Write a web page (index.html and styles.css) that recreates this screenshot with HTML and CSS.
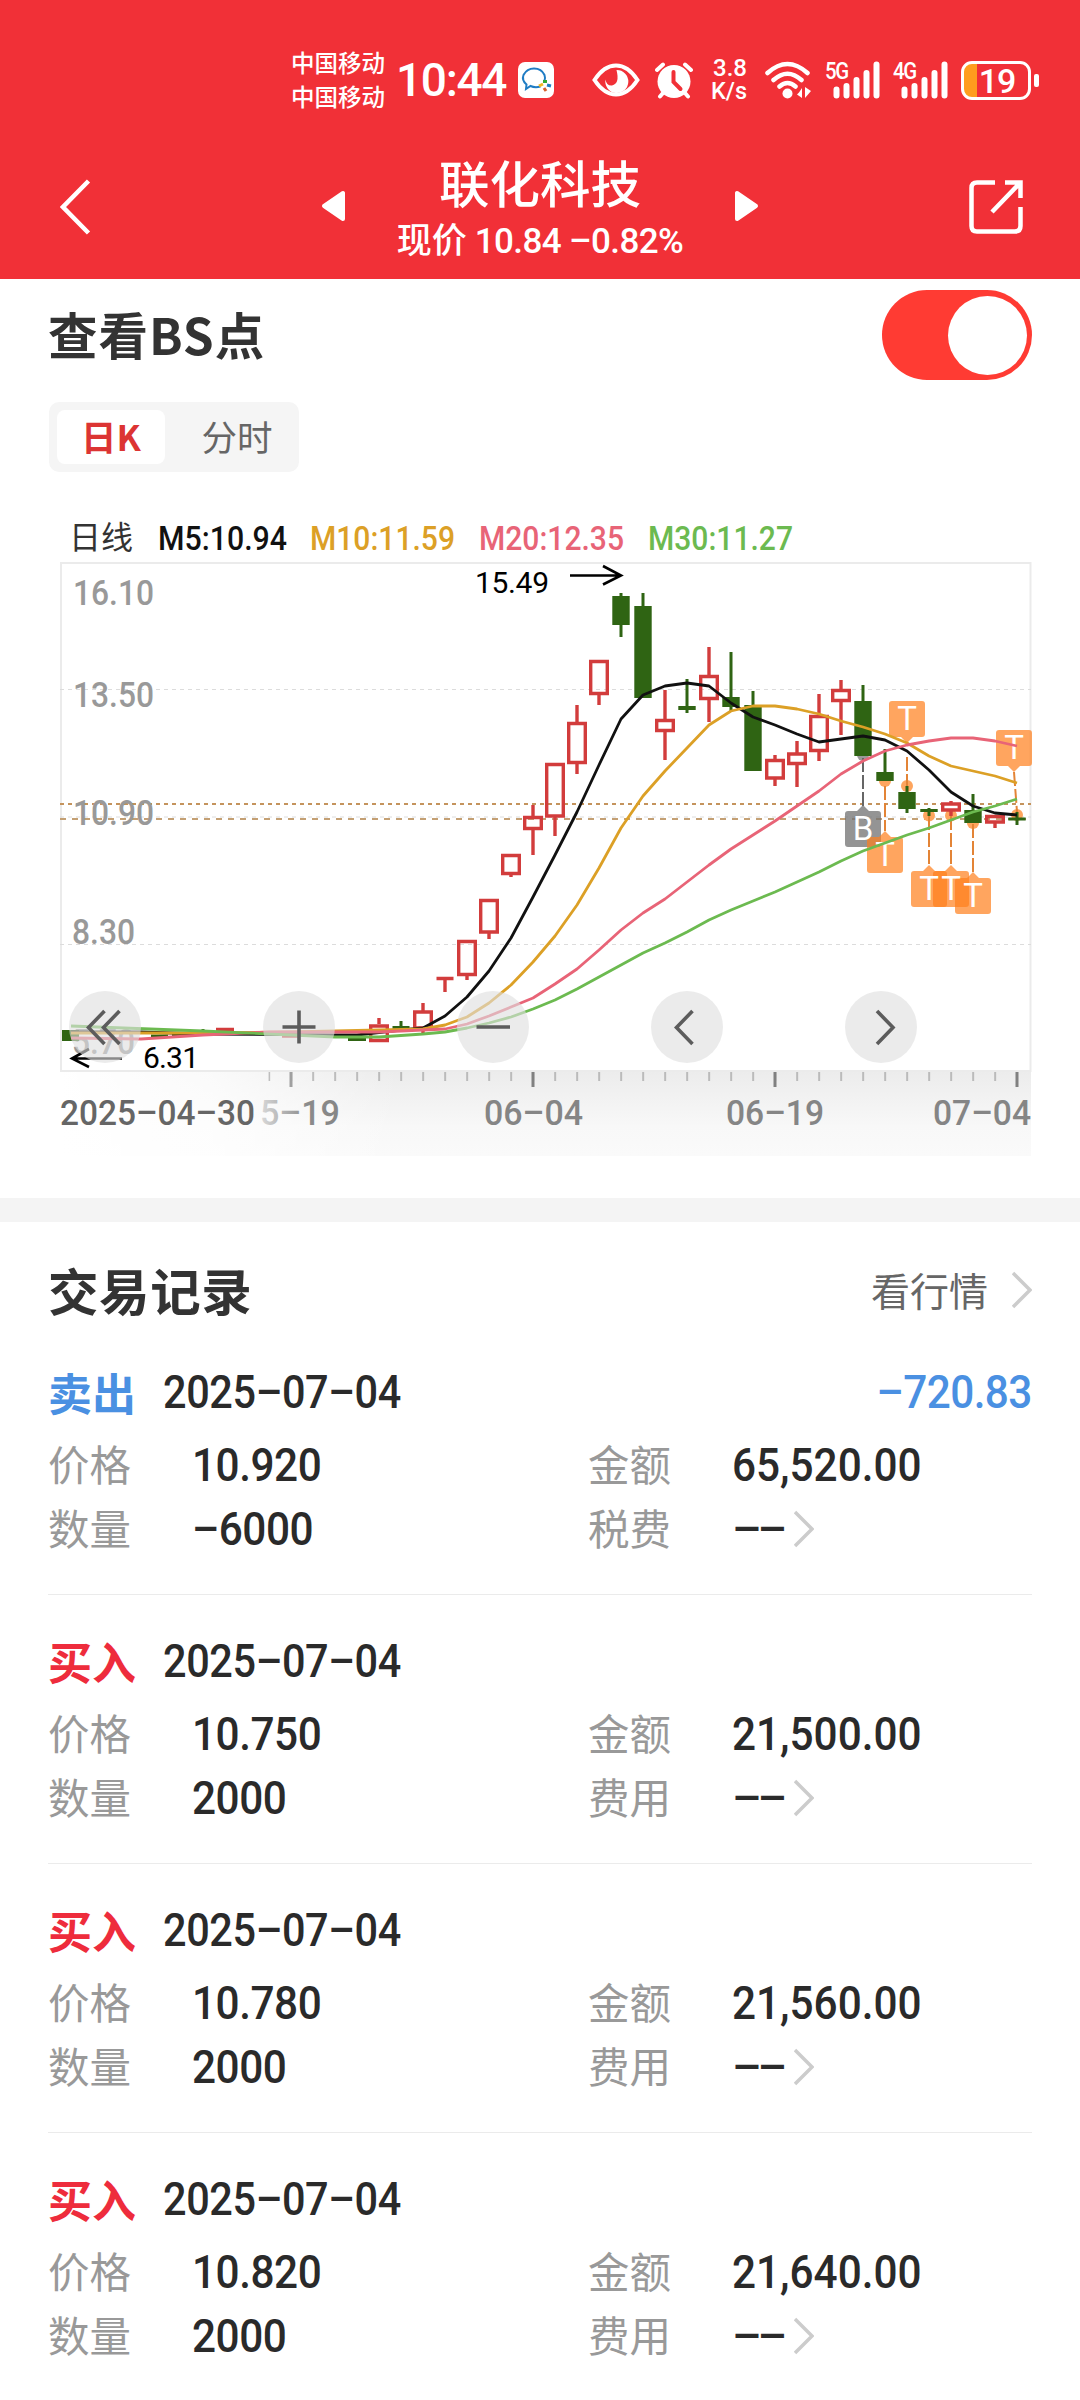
FILE: index.html
```html
<!DOCTYPE html>
<html lang="zh-CN">
<head>
<meta charset="utf-8">
<title>联化科技</title>
<link rel="stylesheet" href="styles.css">
</head>
<body>
<header class="header">
  <div class="status">
    <div class="carrier"><span>中国移动</span><span>中国移动</span></div>
    <div class="clock">10:44</div>
    <svg class="chat" width="36" height="36" viewBox="0 0 36 36"><rect width="36" height="36" rx="7" fill="#fff"/><path d="M22.500 24.500Q17 26 12.500 24L8 27L8.500 22.500Q3.500 18 5.500 13Q9 6.500 16 6.500Q23.500 6.500 26.500 13Q27.500 16 26.500 18.500" fill="none" stroke="#1f7cc4" stroke-width="2"/><path d="M27 18v3" stroke="#3a3" stroke-width="4"/><path d="M29 23l4 1" stroke="#1f7cc4" stroke-width="3"/><path d="M26 26l2 3" stroke="#d6602c" stroke-width="3"/><path d="M21 24l4-2" stroke="#f2b822" stroke-width="3"/></svg>
    <svg class="eye" width="48" height="34" viewBox="0 0 48 34"><path d="M2.500 17Q12 2.500 24 2.500T45.500 17Q36 31.500 24 31.500T2.500 17Z" fill="none" stroke="#fff" stroke-width="4"/><path d="M24.500 7a11.500 11.500 0 1 1-11 9.500q1 6.500 6.500 6q8-2 4.500-15.500Z" fill="#fff"/></svg>
    <svg class="alarm" width="38" height="38" viewBox="0 0 38 38"><circle cx="19" cy="20.500" r="16.500" fill="#fff"/><path d="M2 9l6-5.500M36 9l-6-5.500M8 32l-3 3.500M30 32l3 3.500" stroke="#fff" stroke-width="4" stroke-linecap="round"/><path d="M18.500 11v10l7 7" fill="none" stroke="#f13037" stroke-width="4" stroke-linecap="round"/></svg>
    <div class="speed"><span>3.8</span><span>K/s</span></div>
    <svg class="wifi" width="48" height="38" viewBox="0 0 48 38"><g fill="none" stroke="#fff" stroke-width="4.500" stroke-linecap="round"><path d="M3.500 12Q23.500-6 43.500 12M9.500 19Q23.500 6.500 37.500 19M15.500 25.500Q23.500 18.500 31.500 25.500"/></g><circle cx="23.500" cy="32.500" r="5" fill="#fff"/><path d="M38 27v10l-5-3.500 2-2zM41 26v11l6-7z" fill="#fff"/></svg>
    <div class="signal"><span>5G</span><svg width="47" height="38" viewBox="0 0 47 38"><path d="M3.500 28.500v6M13.500 25v9.500M23.500 19v15.500M33.500 12v22.500M43.500 3.500v31" stroke="#fff" stroke-width="6" stroke-linecap="round"/></svg></div>
    <div class="signal"><span>4G</span><svg width="47" height="38" viewBox="0 0 47 38"><path d="M3.500 28.500v6M13.500 25v9.500M23.500 19v15.500M33.500 12v22.500M43.500 3.500v31" stroke="#fff" stroke-width="6" stroke-linecap="round"/></svg></div>
    <div class="battery"><span>19</span></div><i class="nub"></i>
  </div>
  <nav class="nav">
    <svg class="back" width="34" height="56" viewBox="0 0 34 56"><path d="M28.500 2L3 28l25.500 26" fill="none" stroke="#fff" stroke-width="4.500"/></svg>
    <svg width="24" height="32" viewBox="0 0 24 32"><path d="M22 3v26L3 16z" fill="#fff" stroke="#fff" stroke-width="4" stroke-linejoin="round"/></svg>
    <div class="stock"><div class="name">联化科技</div><div class="quote">现价 <b>10.84 –0.82%</b></div></div>
    <svg width="24" height="32" viewBox="0 0 24 32"><path d="M2 3v26l19-13z" fill="#fff" stroke="#fff" stroke-width="4" stroke-linejoin="round"/></svg>
    <svg class="share" width="56" height="56" viewBox="0 0 56 56"><path d="M27 3.500H9Q3.500 3.500 3.500 9v38q0 5.500 5.500 5.500h38q5.500 0 5.500-5.500V28M37 3.500h15.500V19M52 4L24 33" fill="none" stroke="#fff" stroke-width="4.500"/></svg>
  </nav>
</header>

<section class="view">
  <div class="view-head"><h2>查看BS点</h2><div class="toggle"><i></i></div></div>
  <div class="tabs"><span class="tab active">日K</span><span class="tab">分时</span></div>
</section>

<svg class="chart" width="1080" height="700" viewBox="0 498 1080 700">
  <defs>
    <linearGradient id="axisFill" x1="0" y1="0" x2="0" y2="1"><stop offset="0" stop-color="#ececec"/><stop offset=".65" stop-color="#f8f8f8"/><stop offset="1" stop-color="#fafafa"/></linearGradient>
    <linearGradient id="axisFade" x1="0" y1="0" x2="1" y2="0"><stop offset="0" stop-color="#fff"/><stop offset=".45" stop-color="#fff" stop-opacity=".75"/><stop offset="1" stop-color="#fff" stop-opacity="0"/></linearGradient>
    <linearGradient id="labelFade" gradientUnits="userSpaceOnUse" x1="250" y1="0" x2="345" y2="0"><stop offset="0" stop-color="#8a8a8a" stop-opacity=".15"/><stop offset=".6" stop-color="#858585" stop-opacity=".95"/><stop offset="1" stop-color="#858585"/></linearGradient>
    <pattern id="ticks" patternUnits="userSpaceOnUse" x="268.500" y="1072" width="22" height="10"><rect width="1.200" height="9" fill="#999"/></pattern>
  </defs>
  <text class="cn" x="69" y="549" textLength="64">日线</text>
  <g class="legend">
    <text x="158" y="550" textLength="129" lengthAdjust="spacingAndGlyphs" fill="#111">M5:10.94</text>
    <text x="310" y="550" textLength="145" lengthAdjust="spacingAndGlyphs" fill="#dca026">M10:11.59</text>
    <text x="479" y="550" textLength="145" lengthAdjust="spacingAndGlyphs" fill="#e86477">M20:12.35</text>
    <text x="648" y="550" textLength="145" lengthAdjust="spacingAndGlyphs" fill="#6cba50">M30:11.27</text>
  </g>
  <rect x="61" y="563" width="969.500" height="508" fill="none" stroke="#ebebeb" stroke-width="2"/>
  <path d="M60 689.500h971M60 817h971M60 944.500h971" stroke="#dcdcdc" stroke-dasharray="4 4"/>
  <path d="M60 804h971" stroke="#c4935c" stroke-width="2" stroke-dasharray="4 4"/>
  <path d="M60 819h971" stroke="#c4a074" stroke-width="2" stroke-dasharray="6 6"/>
  <g class="scale">
    <text x="73" y="605" textLength="81" lengthAdjust="spacingAndGlyphs">16.10</text>
    <text x="73" y="707" textLength="81" lengthAdjust="spacingAndGlyphs">13.50</text>
    <text x="73" y="825" textLength="81" lengthAdjust="spacingAndGlyphs">10.90</text>
    <text x="72" y="944" textLength="63" lengthAdjust="spacingAndGlyphs">8.30</text>
    <text x="72" y="1054" textLength="63" lengthAdjust="spacingAndGlyphs">5.70</text>
  </g>
  <g class="peak"><text x="475" y="593" textLength="74">15.49</text><text x="143" y="1068" textLength="56">6.31</text></g>
  <path d="M570 575.500h50M603 566l18 9.500-18 9M122 1058.500H72M89 1049l-17 9.500 17 8.500" fill="none" stroke="#000" stroke-width="2.600"/>

  <g fill="#fea55e">
    <circle cx="863" cy="755" r="6" fill="#999"/>
    <circle cx="885" cy="781" r="6"/><circle cx="907" cy="786" r="6"/><circle cx="929" cy="815.500" r="6"/><circle cx="951" cy="815.500" r="6"/><circle cx="973" cy="823" r="6"/><circle cx="1017" cy="815" r="6"/>
  </g>
  <g stroke="#e38436" stroke-width="2" stroke-dasharray="14 3">
    <path d="M885 786v45M907 757v29M929 816v50M951 816v50M973 824v48M1014 772l3 40"/><path d="M863 758v48" stroke="#666"/>
  </g>
  <g class="up-wick">
    <path d="M379 1018v6M423 1003v8M423 1029v6M445 980v12M467 976v4M489 933v6M511 874v3M533 805v12M533 829v26M555 816v20M577 705v18M577 764v10M599 694v11M665 690v30M665 731v29M709 647v29M709 699v23M775 755v5M775 779v7M797 741v12M797 763v24M819 694v22M819 751v10M841 680v10M841 701v34M951 801v3M951 810v6M995 823v5"/>
  </g>
  <g class="up">
    <path d="M370.700 1026h16.600v14.500h-16.600zM414.700 1012h16.600v16h-16.600zM458.700 941.500h16.600v33h-16.600zM480.700 900.500h16.600v31.500h-16.600zM502.700 855.500h16.600v18h-16.600zM524.700 817.500h16.600v11h-16.600zM546.700 764.500h16.600v51.500h-16.600zM568.700 723.500h16.600v39h-16.600zM590.700 661.500h16.600v32h-16.600zM656.700 720.500h16.600v10h-16.600zM700.700 676.500h16.600v22h-16.600zM766.700 760.500h16.600v17.500h-16.600zM788.700 754h16.600v9.500h-16.600zM810.700 716.500h16.600v34h-16.600zM832.700 690.500h16.600v10h-16.600zM942.700 804h16.600v6h-16.600zM986.700 816.500h16.600v5.500h-16.600z"/>
    <path d="M436.500 978.500h17M216 1029.500h18M282 1036h17"/>
  </g>
  <g class="down-wick"><path d="M401 1021v6M203 1029v5M621 593v44M643 593v20M687 679v34M731 652v59M753 691v20M863 685v20M885 749v30M907 786v27M929 808v8M973 794v20M1017 812v13"/></g>
  <path class="down" d="M62 1030h17v11h-17zM151 1034.500h17v3h-17zM172 1034h17v3h-17zM348 1038h18v3h-18zM392.500 1026h17v4h-17zM612.300 596h17.400v29h-17.400zM634.300 606h17.400v92h-17.400zM678.300 706h17.400v4h-17.400zM722.300 697h17.400v10h-17.400zM744.300 705h17.400v66h-17.400zM854.300 701h17.400v55h-17.400zM876.300 772h17.400v9h-17.400zM898.300 792h17.400v17h-17.400zM920.300 809h17.400v3h-17.400zM964.300 810h17.400v13h-17.400zM1008.300 817.500h17.400v3h-17.400z"/>

  <g class="pins">
    <path d="M892 701h30q3 0 3 3v30q0 3-3 3h-9l-6 6-6-6h-9q-3 0-3-3v-30q0-3 3-3z"/>
    <path d="M999 730h30q3 0 3 3v30q0 3-3 3h-9l-6 6-6-6h-9q-3 0-3-3v-30q0-3 3-3z"/>
    <path class="buy" d="M848 811h9l6-6 6 6h9q3 0 3 3v30q0 3-3 3h-30q-3 0-3-3v-30q0-3 3-3z"/>
    <path d="M870 837h9l6-6 6 6h9q3 0 3 3v30q0 3-3 3h-30q-3 0-3-3v-30q0-3 3-3z"/>
    <path d="M914 871h9l6-6 6 6h9q3 0 3 3v30q0 3-3 3h-30q-3 0-3-3v-30q0-3 3-3z"/>
    <path d="M936 871h9l6-6 6 6h9q3 0 3 3v30q0 3-3 3h-30q-3 0-3-3v-30q0-3 3-3z"/>
    <path d="M958 878h9l6-6 6 6h9q3 0 3 3v30q0 3-3 3h-30q-3 0-3-3v-30q0-3 3-3z"/>
  </g>
  <g class="pin-text">
    <text x="907" y="730">T</text><text x="1014" y="759">T</text><text x="863" y="840">B</text><text x="885" y="866">T</text><text x="929" y="900">T</text><text x="951" y="900">T</text><text x="973" y="907">T</text>
  </g>
  <g class="ma">
    <path stroke="#111" d="M71 1032L141 1032 203 1034 335 1035 357 1035 401 1030 423 1028 445 1016 467 997 489 971 511 938 533 897 555 855 577 812 599 765 621 719 643 695 665 686 687 683 709 686 731 703 753 717 775 725 797 734 819 742 841 739 863 736 885 740 907 751 929 770 951 792 973 806 995 813 1017 815"/>
    <path stroke="#dca026" d="M71 1033L181 1033 291 1032 423 1029 445 1025 467 1017 489 1003 511 985 533 962 555 936 577 905 599 868 621 828 643 796 665 771 687 748 709 725 731 711 753 706 775 706 797 709 819 714 841 721 863 727 885 734 907 743 929 756 951 766 973 771 995 776 1017 783"/>
    <path stroke="#e86477" d="M71 1038L141 1039 203 1035 269 1032 379 1032 423 1030 445 1029 467 1024 489 1016 511 1007 533 998 555 984 577 969 599 950 621 930 643 913 665 899 687 882 709 865 731 849 753 835 775 821 797 806 819 791 841 774 863 761 885 751 907 745 929 741 951 738 973 738 995 741 1017 746"/>
    <path stroke="#6cba50" d="M71 1026L203 1031 335 1037 379 1037 423 1034 445 1032 467 1028 489 1023 511 1017 533 1009 555 1000 577 989 599 977 621 965 643 953 665 943 687 932 709 920 731 910 753 901 775 892 797 882 819 872 841 861 863 851 885 843 907 835 929 828 951 820 973 812 995 806 1017 799"/>
  </g>

  <rect x="60" y="1072" width="971" height="84" fill="url(#axisFill)"/>
  <rect x="60" y="1072" width="340" height="84" fill="url(#axisFade)"/>
  <rect x="268.500" y="1072" width="748" height="10" fill="url(#ticks)"/>
  <path d="M533 1072v15M775 1072v15M1017 1072v15" stroke="#808080" stroke-width="3"/><path d="M291 1072v15" stroke="#a0a0a0" stroke-width="3"/>
  <g class="dates">
    <text x="260" y="1125" textLength="80" lengthAdjust="spacingAndGlyphs" fill="url(#labelFade)">5–19</text>
    <text x="60" y="1125" textLength="195" lengthAdjust="spacingAndGlyphs" fill="#666">2025–04–30</text>
    <text x="484" y="1125" textLength="99" lengthAdjust="spacingAndGlyphs">06–04</text><text x="726" y="1125" textLength="98" lengthAdjust="spacingAndGlyphs">06–19</text><text x="933" y="1125" textLength="98" lengthAdjust="spacingAndGlyphs">07–04</text>
  </g>
  <g fill="#dfdfdf" fill-opacity=".62"><circle cx="105" cy="1027" r="36"/><circle cx="299" cy="1027" r="36"/><circle cx="493" cy="1027" r="36"/><circle cx="687" cy="1027" r="36"/><circle cx="881" cy="1027" r="36"/></g>
  <path d="M104.500 1011L88.500 1027.500l16 16.500M119.500 1011L103.500 1027.500l16 16.500M282.500 1027h33M299 1010.500v33M476.500 1027h33.500M692.500 1011L676.500 1027.500l16 16.500M877 1011l16 16.500-16 16.500" fill="none" stroke="#5c5c5c" stroke-width="3.600"/>
</svg>

<section class="records">
  <div class="records-head"><h2>交易记录</h2><a><span>看行情</span><svg class="chev" width="20" height="38" viewBox="0 0 20 38"><path d="M1 2l17 17L1 36" fill="none" stroke="#ccc" stroke-width="3.500"/></svg></a></div>
  <article class="record">
    <div class="top"><strong class="sell">卖出</strong><time>2025–07–04</time><em>–720.83</em></div>
    <dl><dt>价格</dt><dd>10.920</dd><dt>金额</dt><dd class="amount">65,520.00</dd><dt>数量</dt><dd>–6000</dd><dt>税费</dt><dd class="fee">––<svg width="20" height="38" viewBox="0 0 20 38"><path d="M1 2l17 17L1 36" fill="none" stroke="#ccc" stroke-width="3.500"/></svg></dd></dl>
  </article>
  <article class="record">
    <div class="top"><strong>买入</strong><time>2025–07–04</time></div>
    <dl><dt>价格</dt><dd>10.750</dd><dt>金额</dt><dd class="amount">21,500.00</dd><dt>数量</dt><dd>2000</dd><dt>费用</dt><dd class="fee">––<svg width="20" height="38" viewBox="0 0 20 38"><path d="M1 2l17 17L1 36" fill="none" stroke="#ccc" stroke-width="3.500"/></svg></dd></dl>
  </article>
  <article class="record">
    <div class="top"><strong>买入</strong><time>2025–07–04</time></div>
    <dl><dt>价格</dt><dd>10.780</dd><dt>金额</dt><dd class="amount">21,560.00</dd><dt>数量</dt><dd>2000</dd><dt>费用</dt><dd class="fee">––<svg width="20" height="38" viewBox="0 0 20 38"><path d="M1 2l17 17L1 36" fill="none" stroke="#ccc" stroke-width="3.500"/></svg></dd></dl>
  </article>
  <article class="record">
    <div class="top"><strong>买入</strong><time>2025–07–04</time></div>
    <dl><dt>价格</dt><dd>10.820</dd><dt>金额</dt><dd class="amount">21,640.00</dd><dt>数量</dt><dd>2000</dd><dt>费用</dt><dd class="fee">––<svg width="20" height="38" viewBox="0 0 20 38"><path d="M1 2l17 17L1 36" fill="none" stroke="#ccc" stroke-width="3.500"/></svg></dd></dl>
  </article>
</section>
</body>
</html>
```
FILE: styles.css
```css
* { box-sizing: border-box; margin: 0; padding: 0; }
body { width: 1080px; height: 2400px; overflow: hidden; background: #fff; font-family: "Noto Sans CJK SC", sans-serif; color: #2a2a2a; }
svg { display: block; flex: none; }

.header { height: 279px; background: #f13037; color: #fff; }
.status { height: 128px; padding: 32px 0 0 291px; display: flex; align-items: center; font-family: Roboto, sans-serif; font-weight: 500; white-space: nowrap; }
.carrier { width: 105px; font: 500 23.5px/34px "Noto Sans CJK SC", sans-serif; display: flex; flex-direction: column; padding-bottom: 2px; }
.clock { width: 122px; font-size: 46px; letter-spacing: -1.3px; }
.eye { margin-left: 38px; }
.alarm { margin-left: 15px; }
.speed { width: 50px; margin-left: 18px; display: flex; flex-direction: column; font-size: 24px; line-height: 23px; padding-left: 2px; }
.speed span { height: 23px; }
.speed span:last-child { font-size: 23.5px; margin-left: -2px; }
.wifi { margin-left: 3px; }
.signal { width: 68px; position: relative; height: 38px; }
.wifi + .signal { margin-left: 13px; }
.signal svg { margin-left: 8px; }
.signal span { position: absolute; left: 0; top: -2px; font-size: 24px; line-height: 24px; letter-spacing: -1.5px; transform: scaleX(.85); transform-origin: left; }
.battery { width: 70px; height: 39px; border: 3px solid #fff; border-radius: 11px; background: linear-gradient(90deg, #ff9d1e 13px, transparent 13px); text-align: center; font-size: 34px; line-height: 34px; font-weight: 500; letter-spacing: -1px; padding-left: 2px; }
.nub { width: 5px; height: 13px; margin-left: 3px; border-radius: 2px; background: #fff; }

.nav { height: 151px; padding-top: 7px; display: grid; grid-template-columns: 321px 24px 390px 24px 1fr; align-items: center; }
.nav > svg { margin-top: -2px; }
.nav .back { margin-left: 60px; margin-top: 0; }
.nav .share { margin-left: 209px; margin-top: 0; }
.stock { text-align: center; padding-top: 6px; white-space: nowrap; }
.name { font-size: 50.5px; line-height: 60px; font-weight: 500; margin-top: -5px; }
.quote { font-size: 35px; line-height: 54px; font-weight: 500; }
.quote b { font: 500 35px Roboto, sans-serif; letter-spacing: -.6px; }

.view { height: 219px; padding: 11px 48px 0 48px; }
.view-head { display: flex; justify-content: space-between; align-items: center; height: 90px; }
h2 { font-size: 50.5px; line-height: 60px; font-weight: 700; color: #333; white-space: nowrap; letter-spacing: .6px; margin-top: -3px; }
.view h2 { font-size: 49.5px; letter-spacing: 1px; }
.toggle { width: 150px; height: 90px; border-radius: 45px; background: #ff3b33; display: flex; align-items: center; justify-content: flex-end; padding-right: 5px; }
.toggle i { width: 79px; height: 79px; border-radius: 50%; background: #fff; }
.tabs { width: 250px; height: 70px; margin: 22px 0 0 1px; padding: 8px; border-radius: 10px; background: #f5f5f5; display: flex; }
.tab { width: 108px; margin-right: 18px; border-radius: 8px; line-height: 51px; text-align: center; font-size: 35.5px; color: #666; white-space: nowrap; }
.tab.active { background: #fff; color: #dc3433; font-weight: 700; }
.tab:last-child { margin-right: 0; }

.chart text { font-family: Roboto, sans-serif; }
.chart .cn { font: 400 32px "Noto Sans CJK SC", sans-serif; fill: #333; }
.chart .legend { font-size: 33px; font-weight: 500; }
.chart .scale { font-size: 35px; font-weight: 500; fill: #999; }
.chart .peak { font-size: 30px; fill: #000; }
.chart .dates { font-size: 35px; font-weight: 500; fill: #858585; }
.up-wick, .up { fill: none; stroke: #d23c3c; stroke-width: 3.4; }
.down-wick { stroke: #2f6413; stroke-width: 3; }
.down { fill: #2f6413; }
.pins { fill: #ff7f1b; fill-opacity: .7; }
.pins .buy { fill: #707070; fill-opacity: .75; }
.pin-text { fill: #fff; font-size: 33px; text-anchor: middle; }
.ma { fill: none; stroke-width: 2.8; stroke-linejoin: round; }

.records { border-top: 24px solid #f4f4f4; padding: 0 48px; }
.records-head { height: 104px; padding-top: 33px; display: flex; justify-content: space-between; align-items: center; }
.records-head a { display: flex; align-items: center; font-size: 39px; line-height: 60px; color: #666; margin-top: -1px; }
.records-head a span { margin-top: -3px; }
.records-head .chev { margin-left: 24px; }
.record { height: 269px; padding-top: 36px; border-bottom: 1px solid #ebebeb; }
.top { height: 60px; display: flex; align-items: center; line-height: 60px; }
.top strong { width: 115px; font-size: 44px; font-weight: 700; color: #ee2c3c; white-space: nowrap; margin-top: -1px; }
.top .sell { color: #4a90e2; }
time, em, dd { font-family: Roboto, sans-serif; font-style: normal; font-weight: 500; font-size: 46px; letter-spacing: -.5px; white-space: nowrap; transform: scaleX(.92); transform-origin: left; }
time { letter-spacing: -.4px; transform: scaleX(.9); }
em { margin-left: auto; color: #4a90e2; letter-spacing: -.6px; transform-origin: right; }
.amount { letter-spacing: 0; }
dl { margin-top: 11px; display: grid; grid-template-columns: 144px 396px 144px 1fr; grid-auto-rows: 64px; line-height: 64px; }
dt { font-size: 41.5px; color: #999; line-height: 61px; }
.fee { display: flex; align-items: center; letter-spacing: -4px; transform: none; }
.fee svg { margin-left: 11px; }
```
